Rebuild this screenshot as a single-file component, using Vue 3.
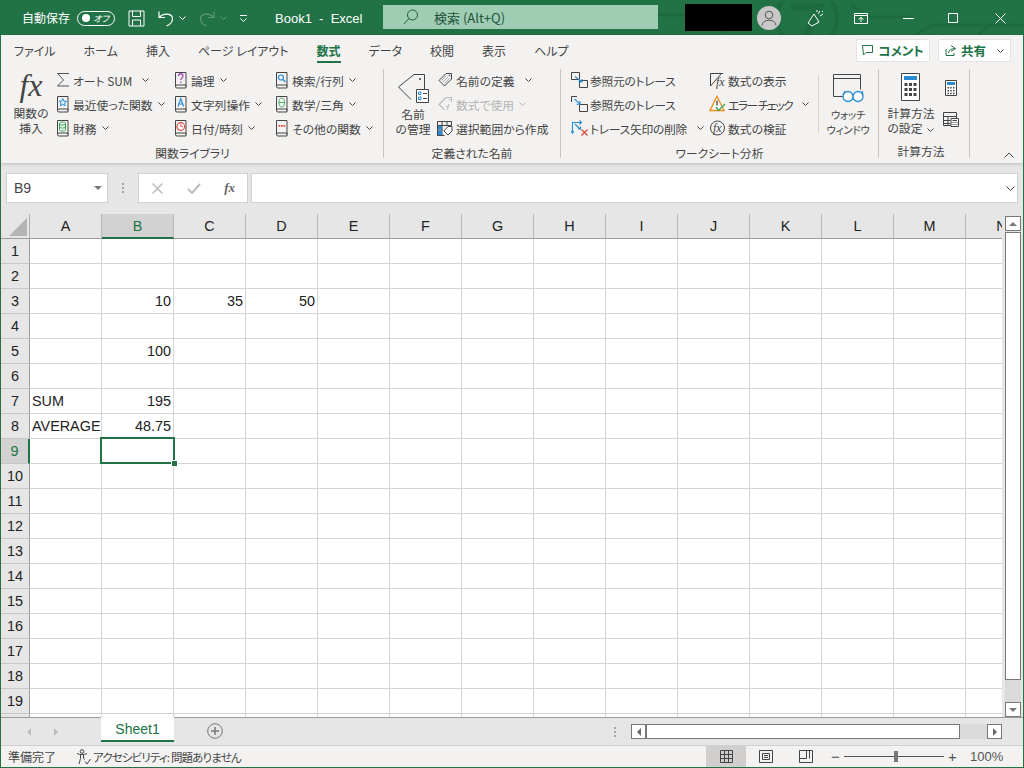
<script setup>
const tabs = ['ファイル', 'ホーム', '挿入', 'ページ レイアウト', '数式', 'データ', '校閲', '表示', 'ヘルプ']

const funcCols = [
  { cls: 'c-f1', items: [
    { icon: 'i-sigma', text: 'オート SUM', wide: true },
    { icon: 'i-star', text: '最近使った関数' },
    { icon: 'i-drum', text: '財務' }
  ] },
  { cls: 'c-f2', items: [
    { icon: 'i-quest', text: '論理' },
    { icon: 'i-letter', text: '文字列操作' },
    { icon: 'i-clock', text: '日付/時刻' }
  ] },
  { cls: 'c-f3', items: [
    { icon: 'i-lens', text: '検索/行列' },
    { icon: 'i-theta', text: '数学/三角' },
    { icon: 'i-dots', text: 'その他の関数' }
  ] }
]

const nameItems = [
  { icon: 'i-tag', text: '名前の定義', wide: true },
  { icon: 'i-tagfx', text: '数式で使用', off: true },
  { icon: 'i-select', text: '選択範囲から作成', plain: true }
]

const traceItems = [
  { icon: 'i-prec', text: '参照元のトレース', plain: true },
  { icon: 'i-dep', text: '参照先のトレース', plain: true },
  { icon: 'i-remove', text: 'トレース矢印の削除', wide: true }
]

const formulaItems = [
  { icon: 'i-showf', text: '数式の表示', plain: true, fx: 'fx-show' },
  { icon: 'i-error', text: 'エラー チェック', wide: true, tight: true },
  { icon: 'i-evalf', text: '数式の検証', plain: true, fx: 'fx-eval' }
]

const columns = 'ABCDEFGHIJKLMN'.split('')
const rows = Array.from({ length: 20 }, (_, i) => i + 1)

const cells = {
  B3: '10', C3: '35', D3: '50',
  B5: '100',
  A7: 'SUM', B7: '195',
  A8: 'AVERAGE', B8: '48.75'
}

function isText(key) {
  return key[0] === 'A'
}
</script>

<template>
  <div class="app">
    <!-- icon sheet -->
    <svg class="defs" aria-hidden="true">
      <symbol id="book" viewBox="0 0 14 18"><path d="M1.5 15.5v-14h10.5v14M1.5 15.5A1.5 1.5 0 0 0 3 17h9v-3H3a1.500 1.500 0 0 0-1.5 1.5z" fill="none" stroke="#444" /></symbol>
      <symbol id="i-sigma" viewBox="0 0 14 18"><path d="M13 2.5H1.5L7.5 9l-6 6H13" fill="none" stroke="#555" /></symbol>
      <symbol id="i-star" viewBox="0 0 14 18"><use href="#book" width="14" height="18" /><path d="M6.800 3.500l1.100 2.600 2.700.2-2 1.800.6 2.700-2.400-1.400-2.400 1.400.6-2.700-2-1.800 2.700-.2z" fill="#d9ecfa" stroke="#2a8dd4" /></symbol>
      <symbol id="i-drum" viewBox="0 0 14 18"><use href="#book" width="14" height="18" /><path d="M3.500 4.500c0-2 6-2 6 0v6c0 2-6 2-6 0zM3.500 4.500c0 2 6 2 6 0M3.500 7.500c0 2 6 2 6 0" fill="none" stroke="#2f9e4f" /></symbol>
      <symbol id="i-quest" viewBox="0 0 14 18"><use href="#book" width="14" height="18" /><path d="M4.500 5c0-3 4.500-3 4.500 0 0 2-2.200 2-2.200 4" fill="none" stroke="#a94dc1" stroke-width="1.300" /><path d="M6.200 10.500h1.300V12H6.200z" fill="#a94dc1" /></symbol>
      <symbol id="i-letter" viewBox="0 0 14 18"><use href="#book" width="14" height="18" /><path d="M4 11.500l2.800-8 2.800 8M5 9h3.600" fill="none" stroke="#2a8dd4" stroke-width="1.200" /></symbol>
      <symbol id="i-clock" viewBox="0 0 14 18"><use href="#book" width="14" height="18" /><circle cx="6.800" cy="7.500" r="3.800" fill="#fff" stroke="#e0483e" stroke-width="1.200" /><path d="M6.800 5.300v2.300h2" fill="none" stroke="#e0483e" /></symbol>
      <symbol id="i-lens" viewBox="0 0 14 18"><use href="#book" width="14" height="18" /><circle cx="6" cy="6.500" r="2.500" fill="none" stroke="#2a8dd4" stroke-width="1.200" /><path d="M8 8.500l2.500 2.500" stroke="#2a8dd4" stroke-width="1.400" /></symbol>
      <symbol id="i-theta" viewBox="0 0 14 18"><use href="#book" width="14" height="18" /><ellipse cx="6.800" cy="7.500" rx="2.800" ry="4.500" fill="none" stroke="#4caf6e" /><path d="M4 7.500h5.600" stroke="#4caf6e" /></symbol>
      <symbol id="i-dots" viewBox="0 0 14 18"><use href="#book" width="14" height="18" /><path d="M3.500 6h1.700v1.700H3.500zM6 6h1.700v1.700H6zM8.500 6h1.700v1.700H8.500z" fill="#e0483e" /></symbol>

      <symbol id="i-tag" viewBox="0 0 16 18"><path d="M9 2.500h5.500V8l-7 7L2 9.500z" fill="none" stroke="#444" /><path d="M4.500 9.500l5-5M6 11l5-5M7.500 12.500l5-5" stroke="#999" stroke-width=".8" /><circle cx="12.500" cy="4.500" r=".8" fill="#444" /></symbol>
      <symbol id="i-tagfx" viewBox="0 0 16 18"><path d="M9 2.500h5.500V7M7.500 14.500L2 9.500l7-7" fill="none" stroke="#bbb" stroke-width="1.200" /><circle cx="12.500" cy="4.500" r=".8" fill="#bbb" /><path d="M10 15l2-6M9 11.500h3" stroke="#bbb" /></symbol>
      <symbol id="i-select" viewBox="0 0 16 18"><path d="M.5 2.500h14v4H.5zM.5 6.500v10h7M5 2.500v14M10 2.500v4M.5 11h5" fill="none" stroke="#444" /><path d="M1 7h4v3.500H1zM1 11.500h4V16H1z" fill="#2a8dd4" /><path d="M11 7.500h4V12l-4 4-4-4z" fill="#fff" stroke="#444" /></symbol>

      <symbol id="i-prec" viewBox="0 0 17 18"><path d="M.5 1.500h8v7h-8zM8.500 9.500h8v7h-8z" fill="none" stroke="#444" /><path d="M4 5.500l6 5M7.500 11H11V8" fill="none" stroke="#2a8dd4" stroke-width="1.100" /></symbol>
      <symbol id="i-dep" viewBox="0 0 17 18"><path d="M.5 7V1.500H6M8.500 9.500h8v7h-8z" fill="none" stroke="#444" /><path d="M3.500 4l5.500 5M5.500 9.300H9V6" fill="none" stroke="#2a8dd4" stroke-width="1.100" /></symbol>
      <symbol id="i-remove" viewBox="0 0 17 18"><path d="M1.500 14V3.500h9M8.500 1.500l2 2-2 2M.2 12l1.300 2.200L2.800 12M4 5l5 5M7 10h2.500V7.500" fill="none" stroke="#2a8dd4" stroke-width="1.100" /><path d="M10.500 10.500l6 6M16.500 10.500l-6 6" stroke="#e0483e" stroke-width="1.300" /></symbol>

      <symbol id="i-showf" viewBox="0 0 17 18"><path d="M14 2.500H1.500V15M1.500 15L12 3" fill="none" stroke="#444" /></symbol>
      <symbol id="i-error" viewBox="0 0 17 18"><path d="M8 1.500l7 14H1z" fill="#fff" stroke="#ef8a17" stroke-width="1.300" /><path d="M8 5.500v5" stroke="#444" stroke-width="1.300" /><path d="M7 12l2.500 3.500L16 9" fill="none" stroke="#3aa35c" stroke-width="1.300" /></symbol>
      <symbol id="i-evalf" viewBox="0 0 17 18"><circle cx="8.500" cy="9" r="7" fill="none" stroke="#444" /></symbol>

      <symbol id="i-nametag" viewBox="0 0 32 30"><path d="M17 1.500h10.500V19M14 26.500L1.500 14 17 1.500" fill="none" stroke="#444" /><circle cx="23" cy="6" r="1" fill="#444" /><path d="M19.500 16.500h12v13h-12z" fill="#fff" stroke="#444" /><path d="M21.500 19H24v2.500h-2.500zM21.500 24H24v2.500h-2.500z" fill="none" stroke="#2a8dd4" /><path d="M26 20.500h4M26 25.500h4" stroke="#444" /></symbol>
      <symbol id="i-watch" viewBox="0 0 32 32"><path d="M12 23.500H1.500v-22h27v15M1.500 5.500h27" fill="none" stroke="#444" /><circle cx="16" cy="23.500" r="5" fill="#fff" stroke="#2a8dd4" stroke-width="1.300" /><circle cx="26" cy="23.500" r="5" fill="#fff" stroke="#2a8dd4" stroke-width="1.300" /><path d="M11 22l2-4M31 22l-1-4" stroke="#2a8dd4" stroke-width="1.200" fill="none" /></symbol>
      <symbol id="i-calc" viewBox="0 0 20 28"><path d="M.5.500h18v27H.5z" fill="#fff" stroke="#444" /><path d="M3 3h13v4H3z" fill="#2a8dd4" /><path d="M3.500 10h3v3h-3zM8 10h3v3H8zM12.500 10h3v3h-3zM3.500 15h3v3h-3zM8 15h3v3H8zM12.500 15h3v3h-3zM3.500 20h3v3h-3zM8 20h3v3H8zM12.500 20h3v3h-3z" fill="#444" /></symbol>
      <symbol id="i-calcs" viewBox="0 0 12 16"><path d="M.5.500h11v15H.5z" fill="#fff" stroke="#444" /><path d="M2 2h8v3H2z" fill="#2a8dd4" /><path d="M2.500 7H4v1.500H2.500zM5.200 7h1.500v1.500H5.200zM8 7h1.500v1.500H8zM2.500 10H4v1.500H2.500zM5.200 10h1.500v1.500H5.200zM8 10h1.500v1.500H8zM2.500 12.800H4v1.500H2.500zM5.200 12.800h1.500v1.500H5.200zM8 12.800h1.500v1.500H8z" fill="#444" /></symbol>
      <symbol id="i-sheetc" viewBox="0 0 16 15"><path d="M.5.500h13v13H.5zM.5 4.500h13M.5 8.500h7M.5 11.500h7M5 4.500v9" fill="none" stroke="#444" /><path d="M8 6.500h7.500v8H8z" fill="#fff" stroke="#444" /><path d="M9.500 8.500H14M9.500 10.500h1M11.500 10.500h1M13.500 10.500h1M9.500 12.500h1M11.500 12.500h1M13.500 12.500h1" stroke="#444" /></symbol>
    </svg>

    <header class="titlebar">
      <svg class="title-art" width="1022" height="34" aria-hidden="true">
        <g fill="none" stroke="#1c6a3d" stroke-width="3">
          <path d="M655 14h50l18 18" />
          <circle cx="806" cy="17" r="30" stroke-width="4" />
          <path d="M790 6h28l-13 28" stroke-width="7" />
          <path d="M910 36l22-12h92M975 36l14-12" />
          <path d="M850 4l18 12h45" />
        </g>
      </svg>
      <span class="autosave">自動保存</span>
      <span class="toggle"><i class="knob"></i><b>オフ</b></span>
      <svg class="qa-save" width="17" height="17" viewBox="0 0 17 17"><path d="M1 1h15v15H1zM4.500 1v5.500h8V1M4.500 16v-6h8v6" fill="none" stroke="#fff" /></svg>
      <svg class="qa-undo" width="16" height="17" viewBox="0 0 16 17"><path d="M1 1.500v6h6M1.500 7.500C5 2.500 14.500 3 14.500 9c0 3-2.500 5.500-6 7" fill="none" stroke="#fff" stroke-width="1.200" /></svg>
      <svg class="qa-chev" width="7" height="4" viewBox="0 0 7 4"><path d="M.5.500l3 3 3-3" fill="none" stroke="#fff" /></svg>
      <svg class="qa-redo" width="16" height="17" viewBox="0 0 16 17"><path d="M15 1.500v6H9M14.500 7.500C11 2.500 1.500 3 1.500 9c0 3 2.500 5.500 6 7" fill="none" stroke="#5c9a78" stroke-width="1.200" /></svg>
      <svg class="qa-chev2" width="7" height="4" viewBox="0 0 7 4"><path d="M.5.500l3 3 3-3" fill="none" stroke="#5c9a78" /></svg>
      <svg class="qa-custom" width="9" height="7" viewBox="0 0 9 7"><path d="M1 .5h7M1.500 3.500l3 3 3-3" fill="none" stroke="#fff" /></svg>
      <span class="doc">Book1&nbsp; -&nbsp; Excel</span>
      <div class="search">
        <svg width="16" height="16" viewBox="0 0 16 16"><circle cx="9.500" cy="6" r="5" fill="none" stroke="#1d5c38" /><path d="M6 9.500L1 15" stroke="#1d5c38" /></svg>
        <span>検索 (Alt+Q)</span>
      </div>
      <div class="redact"></div>
      <div class="avatar">
        <svg width="16" height="16" viewBox="0 0 16 16"><circle cx="8" cy="5" r="3.800" fill="none" stroke="#555" /><path d="M1 15.500c0-7 14-7 14 0" fill="none" stroke="#555" /></svg>
      </div>
      <svg class="win-cele" width="18" height="18" viewBox="0 0 18 18"><path d="M1 14l4 3 7-4-5-8z" fill="none" stroke="#fff" /><path d="M11 5l2-3M13 7l3-2M10 1v2M16 2l-1 1" stroke="#fff" /></svg>
      <svg class="win-disp" width="14" height="11" viewBox="0 0 14 11"><path d="M.5.500h13v10H.5zM.5 2.500h13M7 9V4.500M4.500 6.500L7 4.500l2.500 2" fill="none" stroke="#fff" /></svg>
      <svg class="win-min" width="11" height="1" viewBox="0 0 11 1"><path d="M0 .5h11" stroke="#fff" /></svg>
      <svg class="win-max" width="10" height="10" viewBox="0 0 10 10"><path d="M.5.500h9v9h-9z" fill="none" stroke="#fff" /></svg>
      <svg class="win-close" width="11" height="11" viewBox="0 0 11 11"><path d="M.5.500l10 10M10.500.500l-10 10" stroke="#fff" /></svg>
    </header>

    <section class="ribbon">
      <nav class="tabs">
        <span v-for="t in tabs" :key="t" class="tab" :class="{ active: t === '数式' }">{{ t }}</span>
        <div class="tab-actions">
          <button class="pill pill-comment">
            <svg width="11" height="11" viewBox="0 0 11 11"><path d="M.5.500h10v7H4L1.500 10z" fill="none" stroke="#217346" /></svg>
            コメント
          </button>
          <button class="pill pill-share">
            <svg width="11" height="11" viewBox="0 0 11 11"><path d="M6 .5l4.500 3L6 6.500M10 3.500C6 3.500 4 5 3.500 8M1 4v6.500h8V8" fill="none" stroke="#217346" /></svg>
            共有
            <svg class="share-chev" width="7" height="4" viewBox="0 0 7 4"><path d="M.5.500l3 3 3-3" fill="none" stroke="#444" /></svg>
          </button>
        </div>
      </nav>

      <div class="groups">
        <!-- 関数ライブラリ -->
        <div class="group g-func">
          <div class="group-body">
            <div class="big b-fx">
              <span class="fx-big">fx</span>
              <span class="big-label">関数の<br />挿入</span>
            </div>
            <div v-for="col in funcCols" :key="col.cls" class="cmd-col" :class="col.cls">
              <div v-for="it in col.items" :key="it.text" class="cmd">
                <svg class="cmd-ico" width="14" height="18"><use :href="'#' + it.icon" /></svg>
                <span>{{ it.text }}</span>
                <svg class="chev" :class="{ wide: it.wide }" width="7" height="4" viewBox="0 0 7 4"><path d="M.5.500l3 3 3-3" fill="none" stroke="#444" /></svg>
              </div>
            </div>
          </div>
          <div class="group-label">関数ライブラリ</div>
        </div>

        <!-- 定義された名前 -->
        <div class="group g-name">
          <div class="group-body">
            <div class="big b-name">
              <svg width="32" height="30"><use href="#i-nametag" /></svg>
              <span class="big-label">名前<br />の管理</span>
            </div>
            <div class="cmd-col">
              <div v-for="it in nameItems" :key="it.text" class="cmd" :class="{ off: it.off }">
                <svg class="cmd-ico" width="16" height="18"><use :href="'#' + it.icon" /></svg>
                <span>{{ it.text }}</span>
                <svg v-if="!it.plain" class="chev" :class="{ wide: it.wide }" width="7" height="4" viewBox="0 0 7 4"><path d="M.5.500l3 3 3-3" fill="none" :stroke="it.off ? '#bbb' : '#444'" /></svg>
              </div>
            </div>
          </div>
          <div class="group-label">定義された名前</div>
        </div>

        <!-- ワークシート分析 -->
        <div class="group g-audit">
          <div class="group-body">
            <div class="cmd-col c-trace">
              <div v-for="it in traceItems" :key="it.text" class="cmd">
                <svg class="cmd-ico trace-ico" width="17" height="18"><use :href="'#' + it.icon" /></svg>
                <span>{{ it.text }}</span>
                <svg v-if="!it.plain" class="chev" :class="{ wide: it.wide }" width="7" height="4" viewBox="0 0 7 4"><path d="M.5.500l3 3 3-3" fill="none" stroke="#444" /></svg>
              </div>
            </div>
            <div class="cmd-col c-check">
              <div v-for="it in formulaItems" :key="it.text" class="cmd">
                <span class="ico-wrap">
                  <svg width="17" height="18"><use :href="'#' + it.icon" /></svg>
                  <i v-if="it.fx" class="ico-fx" :class="it.fx">fx</i>
                </span>
                <span :class="{ tight: it.tight }">{{ it.text }}</span>
                <svg v-if="!it.plain" class="chev" :class="{ wide: it.wide }" width="7" height="4" viewBox="0 0 7 4"><path d="M.5.500l3 3 3-3" fill="none" stroke="#444" /></svg>
              </div>
            </div>
            <div class="inner-sep"></div>
            <div class="big b-watch">
              <svg width="32" height="32"><use href="#i-watch" /></svg>
              <span class="big-label small-label">ウォッチ<br />ウィンドウ</span>
            </div>
          </div>
          <div class="group-label">ワークシート分析</div>
        </div>

        <!-- 計算方法 -->
        <div class="group g-calc">
          <div class="group-body">
            <div class="big b-calc">
              <svg width="20" height="28"><use href="#i-calc" /></svg>
              <span class="big-label">計算方法<br />の設定<svg class="chev" width="7" height="4" viewBox="0 0 7 4"><path d="M.5.500l3 3 3-3" fill="none" stroke="#444" /></svg></span>
            </div>
            <div class="calc-side">
              <svg width="12" height="16"><use href="#i-calcs" /></svg>
              <svg width="16" height="15"><use href="#i-sheetc" /></svg>
            </div>
          </div>
          <div class="group-label label-calc">計算方法</div>
        </div>
      </div>
      <svg class="collapse" width="10" height="6" viewBox="0 0 10 6"><path d="M.5 5.500L5 1l4.500 4.500" fill="none" stroke="#444" /></svg>
    </section>

    <div class="formula-row">
      <div class="namebox">
        <span>B9</span>
        <i class="tri"></i>
      </div>
      <div class="vdots"><i></i><i></i><i></i></div>
      <div class="fx-box">
        <svg width="11" height="11" viewBox="0 0 11 11"><path d="M.5.500l10 10M10.500.500l-10 10" stroke="#bdbdbd" stroke-width="1.500" /></svg>
        <svg width="14" height="11" viewBox="0 0 14 11"><path d="M1 6l4 4 8-9" fill="none" stroke="#bdbdbd" stroke-width="2" /></svg>
        <span class="fx-small">fx</span>
      </div>
      <div class="formula-input">
        <svg width="9" height="5" viewBox="0 0 9 5"><path d="M.5.500l4 4 4-4" fill="none" stroke="#444" /></svg>
      </div>
    </div>

    <div class="sheet-row">
      <div class="sheet">
        <div class="corner"><i></i></div>
        <div v-for="c in columns" :key="c" class="col-head" :class="{ on: c === 'B' }">{{ c }}</div>
        <template v-for="r in rows" :key="r">
          <div class="row-head" :class="{ on: r === 9 }">{{ r < 20 ? r : '' }}</div>
          <div
            v-for="c in columns"
            :key="c + r"
            class="cell"
            :class="{ left: isText(c + r), picked: c + r === 'B9' }"
          >{{ cells[c + r] }}</div>
        </template>
      </div>
      <div class="vscroll">
        <div class="vbtn"><i class="tri up"></i></div>
        <div class="vthumb"></div>
        <div class="vtrack"></div>
        <div class="vbtn"><i class="tri"></i></div>
      </div>
    </div>

    <div class="tabbar">
      <div class="nav-arrows"><i class="ar-l"></i><i class="ar-r"></i></div>
      <div class="sheet-tab">Sheet1</div>
      <div class="add-sheet">
        <svg width="16" height="16" viewBox="0 0 16 16"><circle cx="8" cy="8" r="7.300" fill="none" stroke="#777" /><path d="M8 4v8M4 8h8" stroke="#777" stroke-width="1.500" /></svg>
      </div>
      <div class="vdots tab-dots"><i></i><i></i><i></i></div>
      <div class="hscroll">
        <div class="hbtn"><i class="ar-l dark"></i></div>
        <div class="hthumb"></div>
        <div class="htrack"></div>
        <div class="hbtn"><i class="ar-r dark"></i></div>
      </div>
    </div>

    <footer class="status">
      <span class="ready">準備完了</span>
      <svg class="a11y" width="15" height="16" viewBox="0 0 15 16"><circle cx="6" cy="2.500" r="1.800" fill="none" stroke="#444" /><path d="M1 4.500c3 1.500 7 1.500 10 0M4.500 6v3.500L3 15M7.500 6v3l1 1.500M9 12.500l2 2.500 3.500-5" fill="none" stroke="#444" /></svg>
      <span class="a11y-text">アクセシビリティ: 問題ありません</span>
      <div class="views">
        <div class="view on">
          <svg width="13" height="13" viewBox="0 0 13 13"><path d="M.5.500h12v12H.5zM.5 4.500h12M.5 8.500h12M4.500.500v12M8.500.500v12" fill="none" stroke="#444" /></svg>
        </div>
        <div class="view">
          <svg width="14" height="13" viewBox="0 0 14 13"><path d="M.5.500h13v12H.5zM3.500 3.500h7v6h-7zM5 5.500h4M5 7.500h4" fill="none" stroke="#444" /></svg>
        </div>
        <div class="view">
          <svg width="14" height="13" viewBox="0 0 14 13"><path d="M.5.500h13v12H.5zM.5 8.500h7V.500M10.500.500v8" fill="none" stroke="#444" /></svg>
        </div>
      </div>
      <div class="zoom">
        <span class="zoom-sign">−</span>
        <div class="slider"><i></i></div>
        <span class="zoom-sign">+</span>
      </div>
      <span class="percent">100%</span>
    </footer>
  </div>
</template>

<style>
html,
body {
  margin: 0;
  background: #fff;
}
</style>

<style scoped>
.app {
  position: relative;
  width: 1024px;
  height: 768px;
  box-sizing: border-box;
  border: 1px solid #217346;
  overflow: hidden;
  display: flex;
  flex-direction: column;
  font-family: "Noto Sans CJK JP", sans-serif;
  font-feature-settings: "palt";
  font-size: 11.8px;
  color: #444;
  background: #f3f2f1;
}

.defs {
  position: absolute;
  width: 0;
  height: 0;
}

/* Title bar */
.titlebar {
  position: relative;
  flex: none;
  height: 34px;
  display: flex;
  align-items: center;
  background: #217346;
  color: #fff;
  font-size: 13px;
}

.titlebar > *:not(.title-art) {
  position: relative;
}

.title-art {
  position: absolute;
  left: 0;
  top: 0;
}

.autosave {
  width: 48px;
  margin-left: 21px;
  white-space: nowrap;
  font-size: 12px;
  line-height: 1;
}

.toggle {
  box-sizing: border-box;
  width: 38px;
  height: 15px;
  margin-left: 7px;
  border: 1px solid #fff;
  border-radius: 8px;
  display: flex;
  align-items: center;
  justify-content: space-between;
  padding: 0 5px 0 4px;
}

.knob {
  width: 8px;
  height: 8px;
  border-radius: 50%;
  background: #fff;
}

.toggle b {
  font-size: 9px;
  font-weight: 400;
  font-style: italic;
}

.qa-save { margin-left: 13px; }
.qa-undo { margin-left: 13px; }
.qa-chev { margin-left: 5px; }
.qa-redo { margin-left: 13px; }
.qa-chev2 { margin-left: 5px; }
.qa-custom { margin-left: 12px; }

.doc {
  width: 90px;
  margin-left: 27px;
  white-space: nowrap;
  font-family: "Liberation Sans", sans-serif;
  font-size: 13px;
}

.search {
  box-sizing: border-box;
  width: 275px;
  height: 24px;
  margin-left: 18px;
  margin-top: -2px;
  padding-left: 20px;
  display: flex;
  align-items: center;
  gap: 15px;
  background: #9fcdb3;
  color: #23533a;
}

.redact {
  width: 67px;
  height: 27px;
  margin-left: 27px;
  margin-top: -1px;
  background: #000;
}

.avatar {
  width: 24px;
  height: 24px;
  margin-left: 5px;
  border-radius: 50%;
  background: #c8c8c8;
  display: flex;
  align-items: center;
  justify-content: center;
}

.win-cele { margin-left: 26px; }
.win-disp { margin-left: 29px; }
.win-min { margin-left: 35px; }
.win-max { margin-left: 34px; }
.win-close { margin-left: 37px; }

/* Ribbon */
.ribbon {
  position: relative;
  flex: none;
  height: 128px;
  box-sizing: border-box;
  background: #f3f2f1;
  box-shadow: 0 1px 3px rgba(0, 0, 0, 0.18);
  z-index: 1;
}

.tabs {
  height: 33px;
  box-sizing: border-box;
  padding: 0 0 2px 13px;
  display: flex;
  align-items: center;
  gap: 28px;
  font-size: 12px;
}

.tab {
  position: relative;
  white-space: nowrap;
  line-height: 18px;
}

.tab.active {
  color: #217346;
  font-weight: 700;
}

.tab.active::after {
  content: "";
  position: absolute;
  left: 0;
  right: 0;
  bottom: -3px;
  height: 2px;
  background: #217346;
}

.tab-actions {
  margin-left: auto;
  margin-right: 12px;
  display: flex;
  gap: 8px;
}

.pill {
  box-sizing: border-box;
  height: 23px;
  display: flex;
  align-items: center;
  justify-content: center;
  gap: 5px;
  border: 1px solid #e3e2e0;
  border-radius: 2px;
  background: #fff;
  color: #217346;
  font: 700 12.5px "Noto Sans CJK JP", sans-serif;
  font-feature-settings: "palt";
  padding: 0;
}

.pill-comment { width: 74px; }
.pill-share { width: 73px; }
.share-chev { margin-left: 6px; }

.groups {
  display: flex;
  height: 89px;
  margin-top: 1px;
  padding-left: 1px;
}

.group {
  box-sizing: border-box;
  height: 89px;
  border-right: 1px solid #c8c6c4;
  display: flex;
  flex-direction: column;
  flex: none;
}

.g-func { width: 382px; }
.g-name { width: 177px; }
.g-audit { width: 318px; }
.g-calc { width: 91px; }

.group-body {
  display: flex;
  height: 72px;
}

.group-label {
  margin-top: 6px;
  line-height: 14px;
  text-align: center;
}

.label-calc {
  padding-right: 6px;
}

.big {
  display: flex;
  flex-direction: column;
  align-items: center;
  flex: none;
}

.big-label {
  text-align: center;
  line-height: 15px;
  white-space: nowrap;
}

.small-label {
  font-size: 10.5px;
  letter-spacing: -0.3px;
}

.b-fx {
  width: 46px;
  margin-left: 6px;
}

.fx-big {
  height: 34px;
  font: italic 32px/32px "Liberation Serif", serif;
  color: #444;
  margin-bottom: 2px;
}

.cmd-col {
  display: flex;
  flex-direction: column;
  flex: none;
  margin-top: -1px;
}

.c-f1 { width: 118px; margin-left: 2px; }
.c-f2 { width: 101px; }
.c-f3 { width: 100px; }

.cmd {
  height: 24px;
  display: flex;
  align-items: center;
  white-space: nowrap;
}

.cmd.off {
  color: #b4b4b4;
}

.cmd-ico {
  flex: none;
  margin-right: 3px;
}

.tight {
  letter-spacing: -1.5px;
}

.chev {
  flex: none;
  margin-left: 5px;
  vertical-align: middle;
}

.chev.wide {
  margin-left: 10px;
}

.b-name {
  width: 58px;
  padding-top: 4px;
}

.b-name .big-label {
  margin-top: 3px;
}

.g-name .cmd-col {
  margin-left: -5px;
}

.c-trace {
  width: 138px;
  margin-left: 10px;
  letter-spacing: -0.3px;
}

.trace-ico {
  margin-right: 2px;
}

.c-check {
  width: 109px;
}

.ico-wrap {
  position: relative;
  width: 17px;
  height: 18px;
  margin-right: 2px;
}

.ico-fx {
  position: absolute;
  font: italic 12px/16px "Liberation Serif", serif;
}

.fx-show {
  left: 7px;
  top: 3px;
}

.fx-eval {
  left: 4px;
  top: 1px;
}

.inner-sep {
  width: 1px;
  height: 58px;
  margin-top: 6px;
  background: #d8d6d4;
}

.b-watch {
  width: 58px;
  padding-top: 4px;
}

.b-watch .big-label {
  margin-top: 2px;
}

.b-calc {
  width: 58px;
  margin-left: 3px;
  padding-top: 4px;
}

.b-calc .big-label {
  margin-top: 4px;
}

.calc-side {
  width: 22px;
  display: flex;
  flex-direction: column;
  align-items: center;
  gap: 16px;
  padding-top: 11px;
}

.collapse {
  position: absolute;
  right: 9px;
  bottom: 5px;
}

/* Formula bar */
.formula-row {
  flex: none;
  height: 51px;
  box-sizing: border-box;
  padding: 10px 5px 11px 5px;
  display: flex;
  align-items: stretch;
  background: #e6e6e6;
}

.namebox,
.fx-box,
.formula-input {
  box-sizing: border-box;
  height: 30px;
  background: #fff;
  border: 1px solid #d0d0d0;
  display: flex;
  align-items: center;
}

.namebox {
  width: 102px;
  padding: 0 5px 0 7px;
  justify-content: space-between;
  font: 14px "Liberation Sans", sans-serif;
}

.tri {
  width: 0;
  height: 0;
  border-left: 4px solid transparent;
  border-right: 4px solid transparent;
  border-top: 4px solid #777;
}

.tri.up {
  border-top: none;
  border-bottom: 4px solid #777;
}

.vdots {
  width: 30px;
  display: flex;
  flex-direction: column;
  align-items: center;
  justify-content: center;
  gap: 2px;
}

.vdots i {
  width: 2px;
  height: 2px;
  background: #a6a6a6;
}

.fx-box {
  width: 110px;
  padding: 0 12px 0 13px;
  justify-content: space-between;
}

.fx-small {
  font: italic 700 13px "Liberation Serif", serif;
  color: #666;
}

.formula-input {
  flex: 1;
  margin-left: 3px;
  padding-right: 2px;
  justify-content: flex-end;
}

/* Sheet */
.sheet-row {
  flex: none;
  display: flex;
  height: 503px;
  background: #e6e6e6;
}

.sheet {
  width: 1001px;
  height: 503px;
  overflow: hidden;
  display: grid;
  grid-template-columns: 29px repeat(14, 72px);
  grid-auto-rows: 25px;
  font: 14.4px "Liberation Sans", sans-serif;
  color: #222;
  background: #fff;
}

.corner {
  box-sizing: border-box;
  position: relative;
  background: #e6e6e6;
  border-right: 1px solid #b0b0b0;
  border-bottom: 1px solid #9c9c9c;
}

.corner i {
  position: absolute;
  left: 8px;
  bottom: 2px;
  width: 18px;
  height: 18px;
  background: #b4b4b4;
  clip-path: polygon(100% 0, 100% 100%, 0 100%);
}

.col-head {
  box-sizing: border-box;
  display: flex;
  align-items: center;
  justify-content: center;
  background: #e6e6e6;
  border-right: 1px solid #b8b8b8;
  border-bottom: 1px solid #9c9c9c;
}

.col-head.on {
  background: #d2d2d2;
  color: #217346;
  border-bottom: 2px solid #217346;
}

.row-head {
  box-sizing: border-box;
  display: flex;
  align-items: center;
  justify-content: center;
  background: #e6e6e6;
  border-right: 1px solid #9c9c9c;
  border-bottom: 1px solid #c6c6c6;
}

.row-head.on {
  background: #d2d2d2;
  color: #217346;
  border-right: 2px solid #217346;
}

.cell {
  position: relative;
  box-sizing: border-box;
  display: flex;
  align-items: center;
  justify-content: flex-end;
  padding: 0 2px;
  border-right: 1px solid #d4d4d4;
  border-bottom: 1px solid #d4d4d4;
  white-space: nowrap;
  overflow: hidden;
}

.cell.left {
  justify-content: flex-start;
}

.cell.picked {
  overflow: visible;
  z-index: 1;
}

.cell.picked::before {
  content: "";
  position: absolute;
  left: -2px;
  top: -2px;
  width: 75px;
  height: 27px;
  box-sizing: border-box;
  border: 2px solid #217346;
}

.cell.picked::after {
  content: "";
  position: absolute;
  left: 69px;
  top: 21px;
  width: 5px;
  height: 5px;
  background: #217346;
  border: 1px solid #fff;
}

.vscroll {
  flex: 1;
  box-sizing: border-box;
  padding: 2px 2px 0 3px;
  display: flex;
  flex-direction: column;
}

.vbtn {
  box-sizing: border-box;
  flex: none;
  height: 15px;
  background: #fff;
  border: 1px solid #777;
  display: flex;
  align-items: center;
  justify-content: center;
}

.vthumb {
  flex: none;
  height: 448px;
  box-sizing: border-box;
  margin-top: 1px;
  background: #fff;
  border: 1px solid #777;
}

.vtrack {
  flex: 1;
  background: #dadada;
}

/* Sheet tabs */
.tabbar {
  flex: none;
  height: 28px;
  box-sizing: border-box;
  border-top: 1px solid #9c9c9c;
  display: flex;
  background: #e6e6e6;
}

.nav-arrows {
  width: 100px;
  padding-left: 26px;
  box-sizing: border-box;
  display: flex;
  align-items: center;
  gap: 23px;
}

.ar-l,
.ar-r {
  width: 0;
  height: 0;
  border-top: 4px solid transparent;
  border-bottom: 4px solid transparent;
}

.ar-l {
  border-right: 4px solid #bdbdbd;
}

.ar-r {
  border-left: 4px solid #bdbdbd;
}

.ar-l.dark {
  border-right-color: #666;
}

.ar-r.dark {
  border-left-color: #666;
}

.sheet-tab {
  box-sizing: border-box;
  width: 73px;
  height: 25px;
  margin-top: -1px;
  display: flex;
  align-items: center;
  justify-content: center;
  background: #fff;
  color: #217346;
  border-bottom: 2px solid #217346;
  font: 14px "Liberation Sans", sans-serif;
}

.add-sheet {
  margin-left: 33px;
  margin-top: 5px;
}

.tab-dots {
  width: 8px;
  margin-left: 388px;
}

.hscroll {
  width: 371px;
  height: 15px;
  margin-top: 6px;
  margin-left: 12px;
  display: flex;
}

.hbtn {
  box-sizing: border-box;
  flex: none;
  width: 15px;
  background: #fff;
  border: 1px solid #777;
  display: flex;
  align-items: center;
  justify-content: center;
}

.hthumb {
  box-sizing: border-box;
  flex: none;
  width: 314px;
  background: #fff;
  border: 1px solid #777;
}

.htrack {
  flex: 1;
  background: #dadada;
}

/* Status bar */
.status {
  flex: none;
  height: 22px;
  box-sizing: border-box;
  border-top: 1px solid #d0d0d0;
  padding-left: 7px;
  display: flex;
  align-items: center;
  background: #f3f2f1;
  white-space: nowrap;
}

.ready {
  width: 48px;
  font-size: 12px;
}

.a11y {
  margin-left: 20px;
  margin-right: 2px;
}

.a11y-text {
  font-size: 11.5px;
  letter-spacing: -0.85px;
}

.views {
  margin-left: auto;
  display: flex;
  height: 21px;
}

.view {
  width: 40px;
  display: flex;
  align-items: center;
  justify-content: center;
}

.view.on {
  background: #d0cfce;
}

.zoom {
  width: 127px;
  margin-left: 5px;
  display: flex;
  align-items: center;
  gap: 4px;
}

.zoom-sign {
  width: 9px;
  text-align: center;
  font: 15px/15px "Liberation Sans", sans-serif;
  color: #555;
}

.slider {
  position: relative;
  width: 100px;
  height: 1px;
  background: #555;
}

.slider i {
  position: absolute;
  left: 50px;
  top: -5px;
  width: 4px;
  height: 11px;
  background: #777;
}

.percent {
  width: 33px;
  margin-left: 12px;
  margin-right: 20px;
  font: 13px "Liberation Sans", sans-serif;
  color: #555;
}
</style>
